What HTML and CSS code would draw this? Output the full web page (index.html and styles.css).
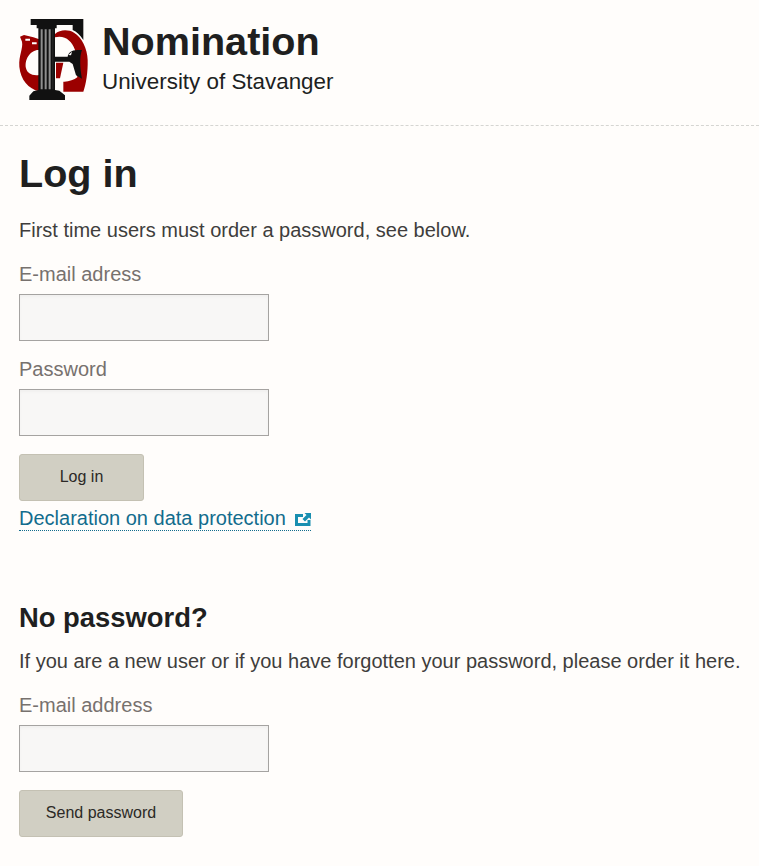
FILE: index.html
```html
<!DOCTYPE html>
<html lang="en">
<head>
    <meta charset="UTF-8">
    <meta name="viewport" content="width=device-width, initial-scale=1.0">
    <title>Nomination - Log in</title>
    <link rel="stylesheet" href="styles.css">
</head>
<body>

    <header class="site-header">
        <svg class="logo" width="72" height="84" viewBox="54 54 216 252" aria-hidden="true">
            <!-- red handled vessel, left side -->
            <path fill="#9b0000" d="M60 110 L72 105 L100 112 L118 118 L118 150 C92 148 72 178 78 205 C82 220 95 228 118 225 L118 274 C85 266 62 240 58 200 C56 165 70 145 66 125 Z"/>
            <path fill="#fff" d="M76 116 L90 116 L90 122 L76 122 Z M96 127 L110 127 L110 133 L96 133 Z"/>
            <!-- red vessel, right side -->
            <path fill="#9b0000" d="M165 102 C180 88 205 88 222 98 C245 112 262 145 263 180 C264 215 258 255 250 275 L190 275 L190 245 C205 246 222 240 232 232 L225 150 C215 122 195 105 165 112 Z"/>
            <path fill="#9b0000" d="M168 188 L190 188 L180 235 L168 235 Z"/>
            <!-- top bar with right serif, column and base -->
            <path fill="#111" d="M92 57 H250 V120 C240 105 230 95 218 90 V75 H170 V85 H165 V270 L178 272 L195 286 V300 H88 V287 L100 274 L115 270 V85 L110 85 V75 H92 Z"/>
            <!-- crossbar and curved arm -->
            <path fill="#111" d="M165 170 H203 C204 160 214 150 232 150 H246 C238 170 240 205 246 236 L228 226 L218 192 L208 185 H165 Z"/>
            <path fill="#fff" d="M205 165 L216 155 L213 166 Z"/>
            <!-- flutes -->
            <path fill="#8f8f8f" d="M122 88 h6 v180 h-6 Z M134 88 h6 v180 h-6 Z M146 88 h6 v180 h-6 Z"/>
            <path fill="#2a2a2a" d="M157 88 h3 v180 h-3 Z"/>
        </svg>
        <div class="site-title">
            <h1>Nomination</h1>
            <p>University of Stavanger</p>
        </div>
    </header>

    <main class="content">
        <h2 class="page-title">Log in</h2>
        <p class="intro">First time users must order a password, see below.</p>

        <!-- Log in form -->
        <form class="login-form">
            <div class="field">
                <label for="email">E-mail adress</label>
                <input id="email" type="text">
            </div>
            <div class="field">
                <label for="password">Password</label>
                <input id="password" type="password">
            </div>
            <button type="button" class="btn btn-login">Log in</button>
        </form>
        <a class="ext-link" href="#">Declaration on data protection
            <svg class="ext-icon" width="16" height="13" viewBox="0 0 16 13" aria-hidden="true">
                <path fill="#1a8fb0" d="M0 1 H8 V4 H3 V10 H12.5 V7 H15.5 V13 H0 Z"/>
                <path fill="#1a8fb0" d="M9.5 0 H16 V6.5 L14 4.5 L10 8.5 L7.5 6 L11.5 2 Z"/>
            </svg>
        </a>

        <!-- Order password -->
        <h3 class="section-title">No password?</h3>
        <p class="order-text">If you are a new user or if you have forgotten your password, please order it here.</p>
        <form class="order-form">
            <div class="field">
                <label for="order-email">E-mail address</label>
                <input id="order-email" type="text">
            </div>
            <button type="button" class="btn btn-send">Send password</button>
        </form>
    </main>

</body>
</html>
```
FILE: styles.css
```css
/* General Styles */
body {
    font-family: "Liberation Sans", Arial, sans-serif;
    margin: 0;
    background-color: #fffdfb;
    color: #403d3c;
    font-size: 20px;
}

/* Header */
.site-header {
    display: flex;
    align-items: flex-start;
    gap: 12px;
    height: 107px;
    padding: 18px 18px 0;
    border-bottom: 1px dashed #d5d5d2;
}

.logo {
    flex: none;
}

.site-title h1 {
    margin: 0;
    font-size: 39.6px;
    line-height: 46px;
    font-weight: bold;
    color: #201f1f;
}

.site-title p {
    margin: 3px 0 0;
    font-size: 22.4px;
    line-height: 30px;
    color: #201f1f;
}

/* Content */
.content {
    padding: 0 10px 0 19px;
}

.page-title {
    margin: 24px 0 0;
    font-size: 39.6px;
    line-height: 46px;
    font-weight: bold;
    color: #201f1f;
}

.intro {
    margin: 19px 0 0;
    line-height: 30px;
}

/* Form Styling */
.field {
    display: flex;
    flex-direction: column;
}

.field label {
    font-size: 20px;
    line-height: 30px;
    color: #77716e;
}

.field input {
    box-sizing: border-box;
    width: 250px;
    height: 46.5px;
    margin: 5px 0 0;
    padding: 0 8px;
    background: #f8f7f6;
    border: 1px solid #a5a3a1;
    border-radius: 0;
    box-shadow: inset 0 2px 3px rgba(0, 0, 0, 0.03);
}

.login-form {
    margin-top: 14px;
}

.login-form .field + .field {
    margin-top: 13.5px;
}

.btn {
    display: block;
    box-sizing: border-box;
    height: 46.5px;
    margin-top: 18.5px;
    background: #d1cfc3;
    border: 1px solid #c4c1b3;
    border-radius: 3px;
    font-family: inherit;
    font-size: 16px;
    color: #2b2926;
    cursor: pointer;
}

.btn-login {
    width: 125px;
}

.btn-send {
    width: 164px;
}

/* External link */
.ext-link {
    display: inline-block;
    margin-top: 5.5px;
    line-height: 24px;
    color: #126c8d;
    text-decoration: none;
    border-bottom: 1px dotted #126c8d;
}

.ext-icon {
    margin-left: 4px;
    vertical-align: -1px;
}

/* No password section */
.section-title {
    margin: 69.5px 0 0;
    font-size: 27.4px;
    line-height: 34px;
    font-weight: bold;
    color: #201f1f;
}

.order-text {
    margin: 11.5px 0 0;
    line-height: 30px;
}

.order-form {
    margin-top: 14px;
}
```
